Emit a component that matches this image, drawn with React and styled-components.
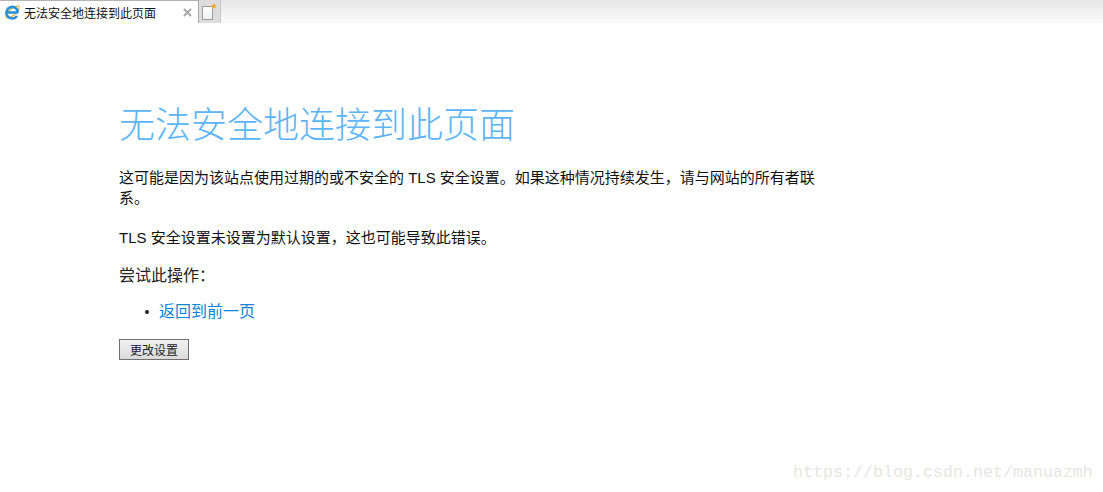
import React from 'react';
import styled, { createGlobalStyle } from 'styled-components';

const CJK = '"Noto Sans CJK SC", "Liberation Sans", sans-serif';

const Global = createGlobalStyle`
  html, body {
    margin: 0;
    padding: 0;
    background: #fff;
    overflow: hidden;
  }
`;

const Page = styled.div`
  position: relative;
  width: 1103px;
  height: 492px;
  font-family: "Liberation Sans", ${CJK};
  color: #111;
`;

const TabBar = styled.div`
  display: flex;
  align-items: stretch;
  height: 23px;
  box-sizing: border-box;
  background: linear-gradient(#e6e6e6, #fbfbfb);
`;

const Tab = styled.div`
  display: flex;
  align-items: center;
  width: 198px;
  box-sizing: border-box;
  padding: 0 6px 0 4px;
  background: #fff;
  border-top: 1px solid #b4b4b4;
  font-size: 12px;
`;

const TabTitle = styled.span`
  margin-left: 3px;
  flex: 1;
  color: #111;
`;

const NewTab = styled.div`
  display: flex;
  align-items: center;
  justify-content: center;
  width: 23px;
  box-sizing: border-box;
  background: #dcdcdc;
  border-left: 1px solid #a6a6a6;
  border-right: 1px solid #c8c8c8;
`;

const Content = styled.main`
  padding: 77px 0 0 119px;
`;

const Title = styled.h1`
  margin: 0;
  width: 500px;
  font-size: 36px;
  font-weight: 300;
  line-height: 52px;
  color: #5db4f6;
`;

const Paragraph = styled.p`
  margin: ${(p) => p.$top}px 0 0;
  width: 700px;
  font-size: 15px;
  line-height: 20px;
  color: #111;
`;

const Subhead = styled.div`
  margin-top: 18px;
  font-size: 16px;
  line-height: 20px;
  color: #222;
`;

const List = styled.ul`
  margin: 16px 0 0;
  padding: 0 0 0 26px;
  list-style: none;
  font-size: 16px;
  line-height: 20px;
`;

const Item = styled.li`
  display: flex;
  align-items: center;
  gap: 10px;

  &::before {
    content: "";
    width: 4px;
    height: 4px;
    border-radius: 50%;
    background: #222;
  }
`;

const Link = styled.a`
  color: #0a84dc;
  text-decoration: none;
`;

const Button = styled.button`
  display: block;
  margin-top: 17px;
  width: 70px;
  height: 21px;
  padding: 0;
  box-sizing: border-box;
  border: 1px solid #707070;
  background: linear-gradient(#f2f2f2, #dadada);
  font-family: ${CJK};
  font-size: 12px;
  color: #222;
`;

const Watermark = styled.div`
  position: absolute;
  left: 793px;
  top: 463px;
  font-family: "Liberation Mono", "DejaVu Sans Mono", monospace;
  font-size: 16.67px;
  line-height: 20px;
  white-space: nowrap;
  color: #e6e6e0;
`;

const IeIcon = () => (
  <svg width="17" height="18" viewBox="0 0 17 18">
    <ellipse cx="8.500" cy="9" rx="8.300" ry="3.200" transform="rotate(-40 8.500 9)" fill="none" stroke="#e8b53c" strokeWidth="1.200" />
    <path d="M3 9.500H14M14 9.500A5.800 5.800 0 1 0 13 13" fill="none" stroke="#2a8fdc" strokeWidth="2.600" />
  </svg>
);

const CloseIcon = () => (
  <svg width="9" height="9" viewBox="0 0 9 9">
    <path d="M1 1l7 7M8 1l-7 7" stroke="#a8a8a8" strokeWidth="2" />
  </svg>
);

const NewTabIcon = () => (
  <svg width="17" height="19" viewBox="0 0 17 19">
    <defs>
      <linearGradient id="sheet" x1="0" y1="0" x2="0" y2="1">
        <stop offset="0" stopColor="#fff" />
        <stop offset="1" stopColor="#efefef" />
      </linearGradient>
    </defs>
    <rect x="1.500" y="4.500" width="10" height="13" fill="url(#sheet)" stroke="#9c9c9c" />
    <path d="M13 1l.9 2.100 2.100.1-1.600 1.400.5 2.100-1.900-1.100-1.900 1.100.5-2.100-1.600-1.400 2.100-.1z" fill="#f4a71d" />
  </svg>
);

export default function App() {
  return (
    <Page>
      <Global />
      <TabBar>
        <Tab>
          <IeIcon />
          <TabTitle>无法安全地连接到此页面</TabTitle>
          <CloseIcon />
        </Tab>
        <NewTab>
          <NewTabIcon />
        </NewTab>
      </TabBar>
      <Content>
        <Title>无法安全地连接到此页面</Title>
        <Paragraph $top={16}>
          这可能是因为该站点使用过期的或不安全的 TLS 安全设置。如果这种情况持续发生，请与网站的所有者联系。
        </Paragraph>
        <Paragraph $top={20}>TLS 安全设置未设置为默认设置，这也可能导致此错误。</Paragraph>
        <Subhead>尝试此操作：</Subhead>
        <List>
          <Item>
            <Link href="#back">返回到前一页</Link>
          </Item>
        </List>
        <Button>更改设置</Button>
      </Content>
      <Watermark>https://blog.csdn.net/manuazmh</Watermark>
    </Page>
  );
}
